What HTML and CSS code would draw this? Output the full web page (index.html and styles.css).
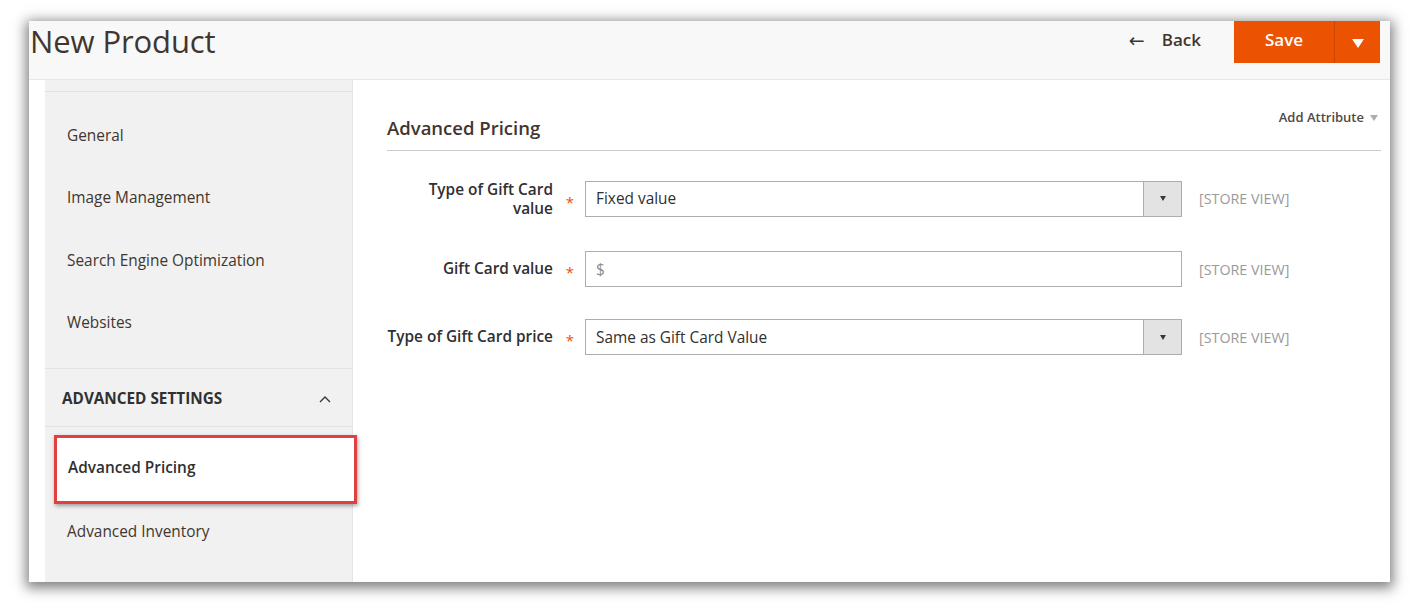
FILE: index.html
```html
<!DOCTYPE html>
<html>
<head>
<meta charset="utf-8">
<title>New Product</title>
<link rel="stylesheet" href="styles.css">
</head>
<body>
<div class="frame">
  <header class="page-header">
    <h1 class="page-title">New Product</h1>
    <div class="actions">
      <a class="back"><span class="back-arrow">&larr;</span>Back</a>
      <div class="save-group">
        <button class="save">Save</button>
        <button class="save-toggle"><span class="tri-down-white"></span></button>
      </div>
    </div>
  </header>
  <div class="page-body">
    <aside class="sidebar">
      <div class="sb-prev"></div>
      <ul class="sb-list sb-list-main">
        <li class="sb-item">General</li>
        <li class="sb-item">Image Management</li>
        <li class="sb-item">Search Engine Optimization</li>
        <li class="sb-item">Websites</li>
      </ul>
      <div class="sb-group-title">
        <span>ADVANCED SETTINGS</span>
        <svg class="chev" width="12" height="8" viewBox="0 0 12 8"><path d="M1 7 L6 2 L11 7" fill="none" stroke="#41362f" stroke-width="1.4"/></svg>
      </div>
      <ul class="sb-list sb-list-adv">
        <li class="sb-item sb-active">Advanced Pricing</li>
        <li class="sb-item">Advanced Inventory</li>
      </ul>
    </aside>
    <main class="content">
      <div class="section-head">
        <h2 class="section-title">Advanced Pricing</h2>
        <div class="add-attr">Add Attribute <span class="tri-down-gray"></span></div>
      </div>
      <div class="form">
        <div class="field field-tall">
          <label class="field-label">Type of Gift Card<br>value</label>
          <span class="req">*</span>
          <div class="select">
            <span class="select-val">Fixed value</span>
            <span class="select-btn"><span class="tri-down-dark"></span></span>
          </div>
          <span class="scope">[STORE VIEW]</span>
        </div>
        <div class="field field-2">
          <label class="field-label">Gift Card value</label>
          <span class="req">*</span>
          <div class="input"><span class="placeholder">$</span></div>
          <span class="scope">[STORE VIEW]</span>
        </div>
        <div class="field field-3">
          <label class="field-label">Type of Gift Card price</label>
          <span class="req">*</span>
          <div class="select">
            <span class="select-val">Same as Gift Card Value</span>
            <span class="select-btn"><span class="tri-down-dark"></span></span>
          </div>
          <span class="scope">[STORE VIEW]</span>
        </div>
      </div>
    </main>
  </div>
</div>
</body>
</html>
```

FILE: styles.css
```css
* { box-sizing: border-box; }
html, body { margin: 0; padding: 0; background: #ffffff; }
body {
  font-family: "Open Sans", "Liberation Sans", sans-serif;
  color: #303030;
  padding: 21px 0 0 29px;
  height: 603px;
  overflow: hidden;
}
.frame {
  width: 1361px;
  height: 561px;
  background: #ffffff;
  overflow: hidden;
  box-shadow: 0 3px 12px 3px rgba(0, 0, 0, 0.5);
  display: flex;
  flex-direction: column;
}
.page-header {
  height: 59px;
  flex: none;
  background: #f8f8f8;
  border-bottom: 1px solid #e8e8e8;
  display: flex;
  justify-content: space-between;
  align-items: flex-start;
}
.page-title {
  margin: 0;
  font-size: 31px;
  font-weight: 400;
  color: #41362f;
  line-height: 40px;
  letter-spacing: -0.1px;
  white-space: nowrap;
  padding-left: 1px;
}
.actions {
  display: flex;
  align-items: flex-start;
  margin-right: 10px;
}
.back {
  font-size: 17px;
  font-weight: 600;
  color: #41362f;
  margin-right: 33px;
  margin-top: 7px;
  line-height: 24px;
  display: flex;
  align-items: center;
}
.back-arrow {
  font-family: "DejaVu Sans", sans-serif;
  font-size: 19px;
  font-weight: 400;
  margin-right: 17px;
  margin-top: -1px;
}
.save-group {
  display: flex;
  height: 42px;
  background: #eb5202;
}
.save, .save-toggle {
  border: 0;
  background: #eb5202;
  color: #ffffff;
  font-family: "Open Sans", "Liberation Sans", sans-serif;
  font-weight: 600;
  font-size: 17px;
  padding: 0;
  height: 42px;
}
.save { width: 100px; padding-bottom: 5px; }
.save-toggle {
  width: 46px;
  border-left: 1px solid #c94502;
  display: flex;
  align-items: center;
  justify-content: center;
}
.tri-down-white {
  width: 0; height: 0;
  border-left: 6px solid transparent;
  border-right: 6px solid transparent;
  border-top: 9px solid #ffffff;
  margin-top: 2px;
}
.page-body {
  flex: 1;
  display: flex;
  min-height: 0;
}
.sidebar {
  width: 308px;
  margin-left: 16px;
  background: #f1f1f1;
  flex: none;
  border-right: 1px solid #e6e6e6;
}
.sb-prev {
  height: 12px;
  border-bottom: 1px solid #e3e3e3;
}
.sb-list {
  list-style: none;
  margin: 0;
  padding: 0;
}
.sb-list-main {
  padding: 12px 0 14px;
  border-bottom: 1px solid #e3e3e3;
}
.sb-item {
  height: 62.5px;
  display: flex;
  align-items: center;
  padding-left: 22px;
  font-size: 15.4px;
  color: #41362f;
  white-space: nowrap;
}
.sb-group-title {
  height: 58px;
  display: flex;
  align-items: center;
  justify-content: space-between;
  padding: 0 21px 0 17px;
  font-size: 15.3px;
  font-weight: 700;
  color: #303030;
  border-bottom: 1px solid #e3e3e3;
}
.chev { margin-top: 2px; }
.sb-list-adv { padding-top: 8px; }
.sb-active {
  background: #ffffff;
  font-weight: 600;
  color: #303030;
  margin: 0 -5px -4px 9px;
  height: 69px;
  border: 3px solid #e0403f;
  padding-left: 11px;
  padding-bottom: 4px;
  box-shadow: 1px 2px 4px rgba(0, 0, 0, 0.35);
  position: relative;
}
.content {
  flex: 1;
  padding: 0 9px 0 34px;
}
.section-head {
  display: flex;
  justify-content: space-between;
  align-items: flex-start;
  border-bottom: 1px solid #cccccc;
  height: 71px;
  padding-top: 25px;
}
.section-title {
  margin: 10px 0 0;
  font-size: 18.5px;
  font-weight: 600;
  color: #41362f;
  line-height: 26px;
}
.add-attr {
  font-size: 13px;
  font-weight: 600;
  color: #514943;
  line-height: 20px;
  margin-top: 2px;
  margin-right: 3px;
  display: flex;
  align-items: center;
}
.tri-down-gray {
  display: inline-block;
  width: 0; height: 0;
  border-left: 4px solid transparent;
  border-right: 4px solid transparent;
  border-top: 6px solid #adadad;
  margin-left: 6px;
  margin-top: 2px;
}
.form {
  padding-top: 28px;
}
.field {
  display: flex;
  align-items: center;
}
.field-2 { margin-top: 33px; }
.field-3 { margin-top: 32px; }
.field-label {
  width: 166px;
  flex: none;
  text-align: right;
  font-size: 15.4px;
  font-weight: 600;
  color: #303030;
  line-height: 18.5px;
  white-space: nowrap;
}
.field-tall .field-label { padding-top: 2px; }
.req {
  width: 32px;
  flex: none;
  text-align: center;
  color: #eb5202;
  font-size: 15px;
  padding-top: 6px;
  padding-left: 2px;
}
.select, .input {
  width: 597px;
  height: 36px;
  flex: none;
  border: 1px solid #adadad;
  background: #ffffff;
  display: flex;
  align-items: center;
  font-size: 15.4px;
  color: #303030;
}
.select-val, .placeholder {
  flex: 1;
  padding-left: 10px;
}
.placeholder { color: #8a8a8a; }
.select-btn {
  width: 38px;
  height: 100%;
  background: #e3e3e3;
  border-left: 1px solid #adadad;
  display: flex;
  align-items: center;
  justify-content: center;
}
.tri-down-dark {
  width: 0; height: 0;
  border-left: 3.5px solid transparent;
  border-right: 3.5px solid transparent;
  border-top: 5px solid #41362f;
}
.scope {
  margin-left: 17px;
  font-size: 14.3px;
  color: #9a9a9a;
  white-space: nowrap;
}
```
